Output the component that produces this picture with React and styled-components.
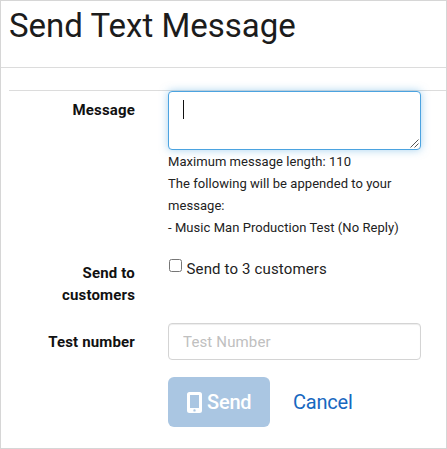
import React from "react";
import styled, { createGlobalStyle } from "styled-components";

const GlobalStyle = createGlobalStyle`
  * { box-sizing: border-box; }
  body {
    margin: 0;
    background: #fff;
    color: #222;
    font: 15px/22px Roboto, "Liberation Sans", sans-serif;
  }
`;

const Panel = styled.main`
  width: 447px;
  height: 449px;
  border: 1px solid #d6d6d6;
  overflow: hidden;
`;

const Header = styled.header`
  height: 67px;
  padding: 4px 0 0 8px;
  border-bottom: 1px solid #dcdcdc;
`;

const Title = styled.h1`
  margin: 0;
  font-size: 33px;
  line-height: 41px;
  font-weight: 400;
  color: #1c1c1c;
  white-space: nowrap;
`;

const Form = styled.form`
  margin: 22px 0 0 8px;
  border-top: 1px solid #dcdcdc;
`;

const Row = styled.div`
  display: grid;
  grid-template-columns: 126px 253px;
  column-gap: 33px;
  height: ${(p) => p.$height}px;
`;

const Label = styled.label`
  padding-top: ${(p) => p.$top}px;
  text-align: right;
  font-weight: 700;
  letter-spacing: 0.16px;
  color: #111;
`;

const MessageBox = styled.div`
  display: flex;
  justify-content: space-between;
  height: 59px;
  padding: 8px 1px 1px 14px;
  border: 1px solid #4ba3e0;
  border-radius: 4px;
  background: #fff;
  box-shadow: 0 0 8px rgba(75, 163, 224, 0.5);
`;

const Caret = styled.span`
  width: 1px;
  height: 19px;
  background: #111;
`;

const ResizeGrip = styled.svg`
  align-self: flex-end;
  width: 9px;
  height: 9px;
  stroke: #555;
`;

const Help = styled.div`
  padding-top: 1px;
  font-size: 13px;
  line-height: 22px;
  letter-spacing: 0.05px;
  color: #222;
`;

const CheckArea = styled.div`
  padding-top: 3px;
`;

const CheckLabel = styled.label`
  display: flex;
  gap: 5px;
  height: 22px;
  letter-spacing: 0.15px;
`;

const Checkbox = styled.input`
  width: 13px;
  height: 13px;
  margin: 1px 0 0 0.5px;
`;

const TextInput = styled.input`
  width: 253px;
  height: 37px;
  padding: 0 14px;
  border: 1px solid #d4d4d4;
  border-radius: 4px;
  font: inherit;
  letter-spacing: 0.15px;
  box-shadow: inset 0 1px 1px rgba(0, 0, 0, 0.075);
  &::placeholder { color: #c0c0c0; opacity: 1; }
`;

const Actions = styled.div`
  display: flex;
  margin-left: 159px;
`;

const SendButton = styled.button`
  display: flex;
  align-items: center;
  gap: 5px;
  width: 102px;
  height: 50px;
  padding: 0 0 0 19px;
  border: 0;
  border-radius: 6px;
  background: #aac6e2;
  color: #fff;
  font: 500 20px/28px Roboto, "Liberation Sans", sans-serif;
  letter-spacing: -0.2px;
`;

const PhoneIcon = styled.svg`
  width: 15px;
  height: 21px;
  fill: #fff;
`;

const CancelLink = styled.a`
  margin-left: 23px;
  font-size: 20px;
  line-height: 50px;
  letter-spacing: -0.2px;
  color: #1768c0;
`;

export default function App() {
  return (
    <Panel>
      <GlobalStyle />
      <Header>
        <Title>Send Text Message</Title>
      </Header>
      <Form>
        <Row $height={164}>
          <Label $top={8}>Message</Label>
          <div>
            <MessageBox role="textbox" aria-label="Message">
              <Caret />
              <ResizeGrip viewBox="0 0 9 9">
                <path d="M0.5 8.5 8.5 0.5M4.5 8.5 8.5 4.5" />
              </ResizeGrip>
            </MessageBox>
            <Help>
              Maximum message length: 110
              <br />
              The following will be appended to your message:
              <br />- Music Man Production Test (No Reply)
            </Help>
          </div>
        </Row>
        <Row $height={68}>
          <Label $top={7}>Send to customers</Label>
          <CheckArea>
            <CheckLabel>
              <Checkbox type="checkbox" />
              Send to 3 customers
            </CheckLabel>
          </CheckArea>
        </Row>
        <Row $height={54}>
          <Label $top={8}>Test number</Label>
          <TextInput placeholder="Test Number" />
        </Row>
        <Actions>
          <SendButton type="button">
            <PhoneIcon viewBox="0 0 15 21">
              <path
                fillRule="evenodd"
                d="M2.5 0h10A2.5 2.5 0 0 1 15 2.5v16a2.5 2.5 0 0 1-2.5 2.5h-10A2.5 2.5 0 0 1 0 18.5v-16A2.5 2.5 0 0 1 2.5 0ZM3 3v13h9V3ZM7.5 17.2a1.2 1.2 0 1 0 0 2.4 1.2 1.2 0 0 0 0-2.4Z"
              />
            </PhoneIcon>
            Send
          </SendButton>
          <CancelLink>Cancel</CancelLink>
        </Actions>
      </Form>
    </Panel>
  );
}
